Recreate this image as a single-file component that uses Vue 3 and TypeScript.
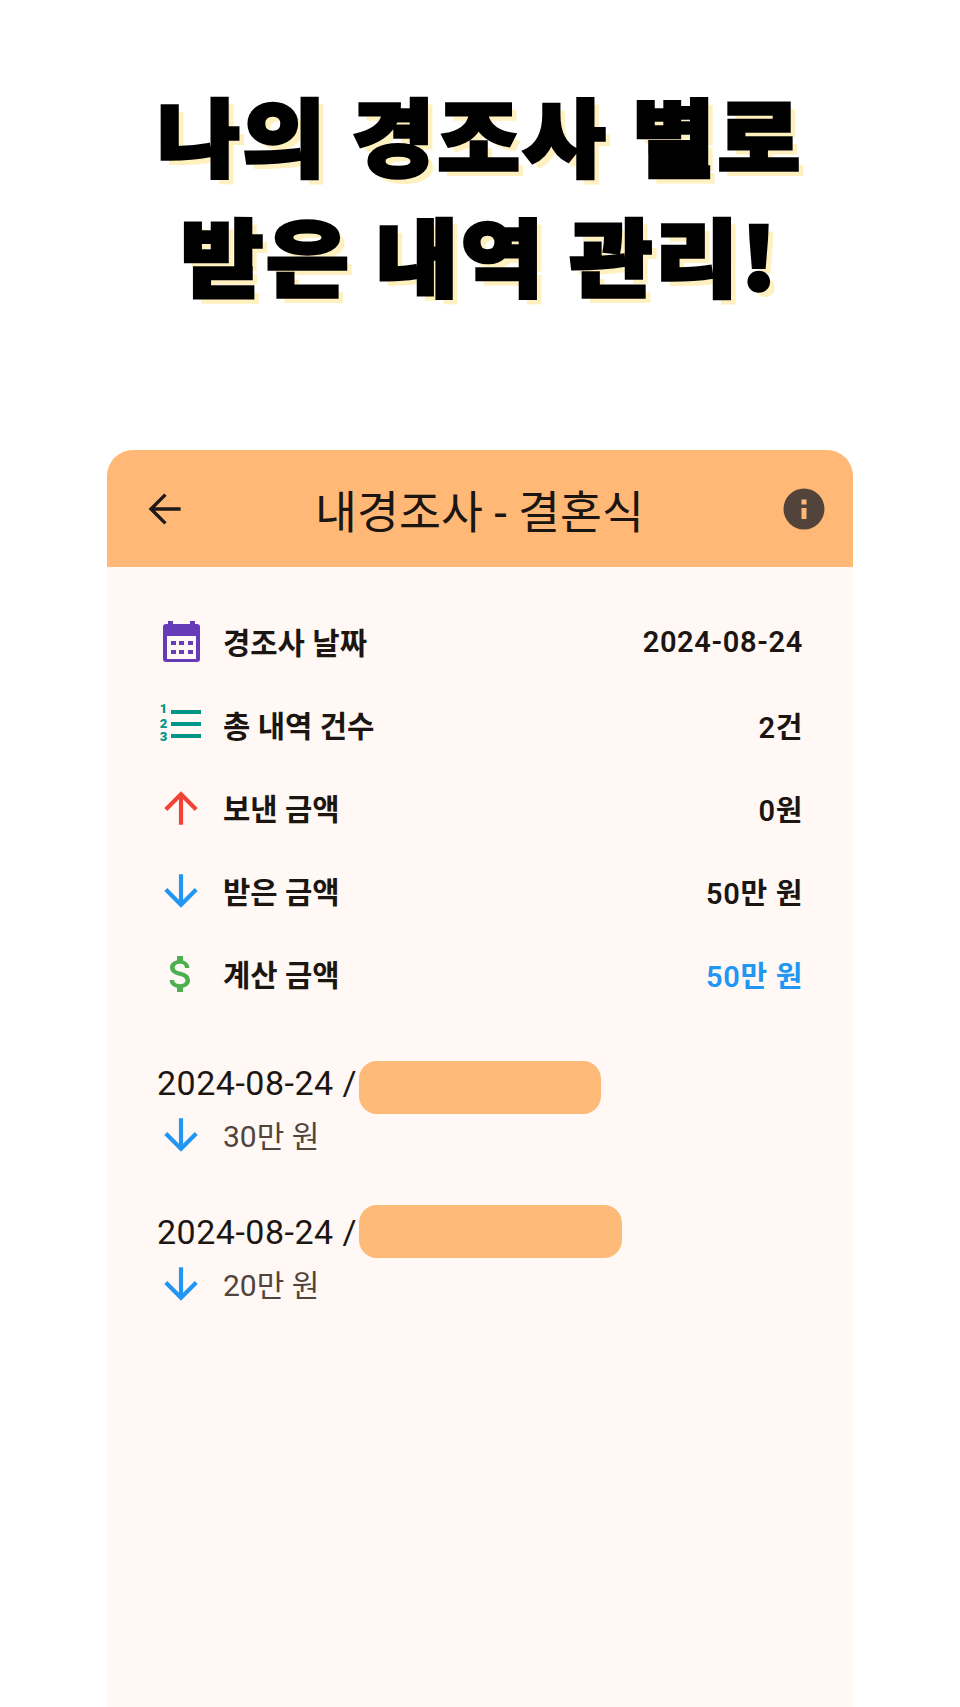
<script setup lang="ts">
interface Row { key: string; label: string; value: string; accent?: boolean }
const rows: Row[] = [
  { key: 'calendar', label: '경조사 날짜', value: '2024-08-24' },
  { key: 'list', label: '총 내역 건수', value: '2건' },
  { key: 'up', label: '보낸 금액', value: '0원' },
  { key: 'down', label: '받은 금액', value: '50만 원' },
  { key: 'dollar', label: '계산 금액', value: '50만 원', accent: true },
]
const entries = [
  { date: '2024-08-24 /', amount: '30만 원', mask: 242, maskTop: 2 },
  { date: '2024-08-24 /', amount: '20만 원', mask: 263, maskTop: -3 },
]
</script>

<template>
  <div class="page">
    <h1 class="headline">
      <span>나의 경조사 별로</span>
      <span>받은 내역 관리!</span>
    </h1>
    <section class="card">
      <header class="bar">
        <svg class="bar-icon" viewBox="0 0 24 24" fill="#1f1a17"><path d="M20.300 11.100H7.600l5.700-5.700L12.100 4.200 4.300 12l7.800 7.800 1.200-1.200-5.700-5.700h12.700z" /></svg>
        <div class="bar-title">내경조사 - 결혼식</div>
        <svg class="bar-icon" viewBox="0 0 48 48"><path fill="#52443a" fill-rule="evenodd" d="M24 3.500a20.500 20.500 0 1 0 0 41 20.500 20.500 0 0 0 0-41zM21.500 23h5v11h-5zM21.500 14.500h5v5h-5z" /></svg>
      </header>
      <div class="body">
        <div class="summary">
          <div v-for="row in rows" :key="row.key" class="row">
            <svg v-if="row.key === 'calendar'" class="icon" viewBox="0 0 48 48">
              <path fill="#673ab7" d="M11 3h5v3h17V3h5v3h2a3 3 0 0 1 3 3v32a3 3 0 0 1-3 3H9a3 3 0 0 1-3-3V9a3 3 0 0 1 3-3h2z" />
              <path fill="#fff8f4" d="M10 18h29v23H10z" />
              <path fill="#673ab7" d="M14 23h5v4h-5zM22 23h5v4h-5zM31 23h5v4h-5zM14 32h5v4h-5zM22 32h5v4h-5zM31 32h5v4h-5z" />
            </svg>
            <svg v-else-if="row.key === 'list'" class="icon" viewBox="0 0 48 48" fill="#009688">
              <path d="M14 9h30v4H14zM14 21h30v4H14zM14 33h30v4H14z" />
              <text class="tiny" x="6.500" y="12">1</text>
              <text class="tiny" x="6.500" y="27">2</text>
              <text class="tiny" x="6.500" y="40">3</text>
            </svg>
            <svg v-else-if="row.key === 'up'" class="icon" viewBox="0.500 0.500 23 23" fill="#f44336"><path d="M4 12l1.410 1.410L11 7.830V20h2V7.830l5.580 5.590L20 12l-8-8z" /></svg>
            <svg v-else-if="row.key === 'down'" class="icon" viewBox="0.500 0.500 23 23" fill="#2196f3"><path d="M20 12l-1.410-1.410L13 16.170V4h-2v12.170l-5.580-5.590L4 12l8 8z" /></svg>
            <svg v-else class="icon" viewBox="0 0 24 24" fill="#4caf50"><path d="M11.800 10.900c-2.270-.59-3-1.200-3-2.150 0-1.090 1.010-1.850 2.700-1.850 1.780 0 2.440.85 2.500 2.100h2.210c-.07-1.720-1.120-3.300-3.210-3.810V3h-3v2.160c-1.940.42-3.500 1.680-3.500 3.610 0 2.310 1.910 3.460 4.700 4.130 2.500.6 3 1.480 3 2.410 0 .69-.49 1.790-2.700 1.790-2.060 0-2.870-.92-2.980-2.100h-2.200c.12 2.190 1.760 3.420 3.680 3.830V21h3v-2.150c1.950-.37 3.500-1.500 3.500-3.550 0-2.840-2.430-3.810-4.700-4.400z" /></svg>
            <span class="label">{{ row.label }}</span>
            <span class="value" :class="{ accent: row.accent }">{{ row.value }}</span>
          </div>
        </div>
        <div class="entries">
          <div v-for="(entry, i) in entries" :key="i" class="entry">
            <div class="entry-top">
              <span class="date">{{ entry.date }}</span>
              <span class="mask" :style="{ width: entry.mask + 'px', top: entry.maskTop + 'px' }"></span>
            </div>
            <div class="entry-sub">
              <svg class="icon" viewBox="0.500 0.500 23 23" fill="#2196f3"><path d="M20 12l-1.410-1.410L13 16.170V4h-2v12.170l-5.580-5.590L4 12l8 8z" /></svg>
              <span class="amount">{{ entry.amount }}</span>
            </div>
          </div>
        </div>
      </div>
    </section>
  </div>
</template>

<style scoped>
.page {
  width: 960px;
  height: 1707px;
  display: flex;
  flex-direction: column;
  align-items: center;
  background: #ffffff;
  overflow: hidden;
  font-family: Roboto, "Noto Sans CJK KR", sans-serif;
  color: #1c1613;
}
.headline {
  margin: 0;
  height: 450px;
  box-sizing: border-box;
  padding-top: 74px;
  display: flex;
  flex-direction: column;
  align-items: center;
  font-family: "Noto Sans CJK KR", sans-serif;
  font-weight: 900;
  font-size: 84px;
  line-height: 120px;
  letter-spacing: 3px;
  color: #000;
  -webkit-text-stroke: 3.500px #000;
  text-shadow: 6px 6px 0 #fff1bf;
}
.headline span {
  display: block;
  transform: scaleX(1.065);
  white-space: nowrap;
}
.card {
  width: 746px;
  flex: 1;
  background: #fff8f4;
  border-radius: 26px 26px 0 0;
  overflow: hidden;
}
.bar {
  height: 117px;
  background: #ffb875;
  display: flex;
  align-items: center;
  justify-content: space-between;
  padding: 0 25px 0 33px;
}
.bar-icon {
  width: 48px;
  height: 48px;
  flex: none;
}
.bar-title {
  margin-right: 9px;
  font-size: 45.600px;
  font-weight: 400;
  color: #1c1613;
}
.body {
  padding: 33px 50px 0;
}
.row {
  height: 83px;
  display: flex;
  align-items: center;
}
.icon {
  width: 48px;
  height: 48px;
  flex: none;
}
.tiny {
  font-family: Roboto, sans-serif;
  font-size: 13px;
  font-weight: 900;
  text-anchor: middle;
}
.label {
  margin-left: 18px;
  padding-bottom: 1px;
  font-size: 29.700px;
  font-weight: 700;
}
.value {
  margin-left: auto;
  font-size: 29px;
  letter-spacing: 0.650px;
  font-weight: 600;
}
.value.accent {
  color: #2196f3;
}
.entries {
  margin-top: 44px;
  display: flex;
  flex-direction: column;
  gap: 49px;
}
.entry-top {
  position: relative;
  height: 48px;
  display: flex;
  align-items: center;
}
.date {
  font-size: 34px;
  letter-spacing: 0.500px;
}
.mask {
  position: absolute;
  left: 202px;
  height: 53px;
  border-radius: 18px;
  background: #fdba78;
}
.entry-sub {
  height: 48px;
  margin-top: 4px;
  display: flex;
  align-items: center;
}
.amount {
  margin-left: 18px;
  padding-bottom: 3px;
  font-size: 30px;
  color: #52443a;
}
</style>

<style>
body {
  margin: 0;
  background: #ffffff;
}
</style>
